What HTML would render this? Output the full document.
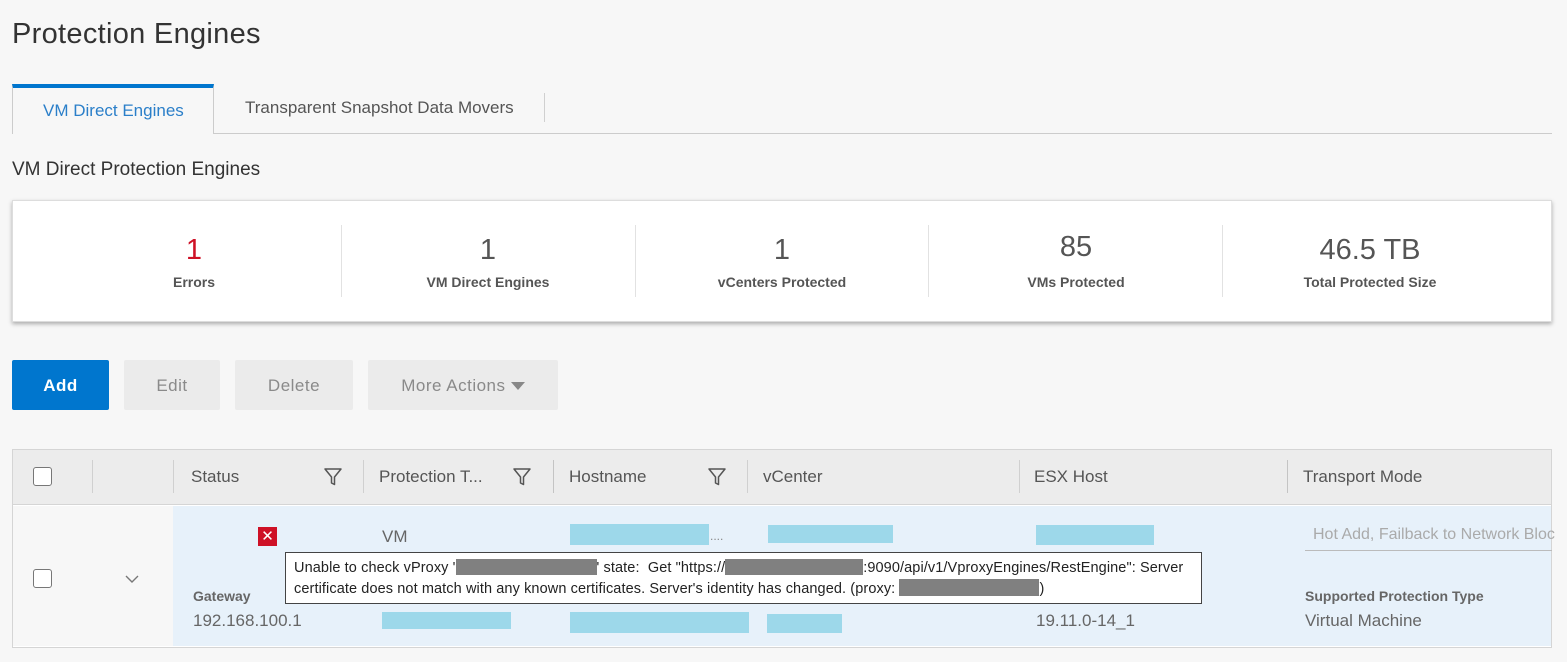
<!DOCTYPE html>
<html><head><meta charset="utf-8"><style>
*{margin:0;padding:0;box-sizing:border-box}
body{width:1567px;height:662px;background:#f7f7f7;font-family:"Liberation Sans",sans-serif;position:relative;overflow:hidden;color:#444}
.a{position:absolute;white-space:nowrap}
.sep{position:absolute;width:1px;background:#d0d0d0}
.cb{position:absolute;width:19px;height:19px;border:1.5px solid #777;border-radius:3px;background:#fff}
.btn{position:absolute;top:360px;height:50px;background:#ebebeb;color:#8a8a8a;font-size:17px;letter-spacing:.5px;display:flex;align-items:center;justify-content:center;border-radius:2px;padding-top:2px}
.num{position:absolute;top:234px;font-size:29px;color:#555;text-align:center;width:290px}
.lab{position:absolute;top:274px;font-size:14px;font-weight:bold;color:#555;text-align:center;width:290px}
.hd{position:absolute;top:467px;font-size:17px;color:#555}
.cy{position:absolute;background:#9dd8ea}
.g{display:inline-block;background:#808080;height:16px;vertical-align:-3px}
</style></head><body>
<div class="a" style="left:12px;top:18px;font-size:29px;letter-spacing:.3px;color:#333">Protection Engines</div>

<div class="a" style="left:12px;top:84px;width:202px;height:50px;border-left:1px solid #ccc;border-right:1px solid #ccc;background:#f7f7f7;border-top:4px solid #0076ce"></div>
<div class="a" style="left:43px;top:101px;font-size:17px;color:#2b7fc9">VM Direct Engines</div>
<div class="a" style="left:245px;top:98px;font-size:17px;color:#555">Transparent Snapshot Data Movers</div>
<div class="sep" style="left:544px;top:93px;height:29px"></div>
<div class="a" style="left:213px;top:133px;width:1339px;height:1px;background:#ccc"></div>

<div class="a" style="left:12px;top:159px;font-size:19px;color:#333">VM Direct Protection Engines</div>

<div class="a" style="left:12px;top:200px;width:1540px;height:122px;background:#fff;border:1px solid #ddd;box-shadow:0 2px 4px rgba(0,0,0,.3)"></div>
<div class="sep" style="left:341px;top:225px;height:72px;background:#e2e2e2"></div>
<div class="sep" style="left:635px;top:225px;height:72px;background:#e2e2e2"></div>
<div class="sep" style="left:928px;top:225px;height:72px;background:#e2e2e2"></div>
<div class="sep" style="left:1222px;top:225px;height:72px;background:#e2e2e2"></div>
<div class="num" style="left:49px;color:#ce1126">1</div><div class="lab" style="left:49px">Errors</div>
<div class="num" style="left:343px">1</div><div class="lab" style="left:343px">VM Direct Engines</div>
<div class="num" style="left:637px">1</div><div class="lab" style="left:637px">vCenters Protected</div>
<div class="num" style="left:931px;top:231px">85</div><div class="lab" style="left:931px">VMs Protected</div>
<div class="num" style="left:1225px">46.5 TB</div><div class="lab" style="left:1225px">Total Protected Size</div>

<div class="btn" style="left:12px;width:97px;background:#0076ce;color:#fff;font-weight:bold">Add</div>
<div class="btn" style="left:124px;width:96px">Edit</div>
<div class="btn" style="left:235px;width:118px">Delete</div>
<div class="btn" style="left:368px;width:190px">More Actions&nbsp;<span style="display:inline-block;width:0;height:0;border-left:7px solid transparent;border-right:7px solid transparent;border-top:8px solid #888"></span></div>

<div class="a" style="left:12px;top:449px;width:1540px;height:199px;border:1px solid #d5d5d5;background:#fff"></div>
<div class="a" style="left:13px;top:450px;width:1538px;height:55px;background:#ececec;border-bottom:1px solid #d5d5d5"></div>
<div class="a" style="left:13px;top:506px;width:160px;height:140px;background:#f7f7f7"></div>
<div class="a" style="left:173px;top:506px;width:1378px;height:140px;background:#e7f1fa"></div>
<div class="sep" style="left:92px;top:460px;height:33px"></div>
<div class="sep" style="left:173px;top:460px;height:33px"></div>
<div class="sep" style="left:363px;top:460px;height:33px"></div>
<div class="sep" style="left:553px;top:460px;height:33px;background:#c4c4c4"></div>
<div class="sep" style="left:747px;top:460px;height:33px"></div>
<div class="sep" style="left:1019px;top:460px;height:33px"></div>
<div class="sep" style="left:1287px;top:460px;height:33px;background:#c4c4c4"></div>
<div class="cb" style="left:33px;top:467px"></div>
<div class="hd" style="left:191px">Status</div>
<div class="hd" style="left:379px">Protection T...</div>
<div class="hd" style="left:569px">Hostname</div>
<div class="hd" style="left:763px">vCenter</div>
<div class="hd" style="left:1034px">ESX Host</div>
<div class="hd" style="left:1303px">Transport Mode</div>
<svg class="a" style="left:323px;top:467px" width="20" height="20" viewBox="0 0 20 20"><path d="M2 2H18L11.5 10V17.5L8.5 16V10Z" fill="none" stroke="#555" stroke-width="1.5" stroke-linejoin="round"/></svg>
<svg class="a" style="left:512px;top:467px" width="20" height="20" viewBox="0 0 20 20"><path d="M2 2H18L11.5 10V17.5L8.5 16V10Z" fill="none" stroke="#555" stroke-width="1.5" stroke-linejoin="round"/></svg>
<svg class="a" style="left:707px;top:467px" width="20" height="20" viewBox="0 0 20 20"><path d="M2 2H18L11.5 10V17.5L8.5 16V10Z" fill="none" stroke="#555" stroke-width="1.5" stroke-linejoin="round"/></svg>

<div class="cb" style="left:33px;top:569px"></div>
<svg class="a" style="left:124px;top:574px" width="16" height="10" viewBox="0 0 16 10"><path d="M2 2L8 8L14 2" fill="none" stroke="#777" stroke-width="1.4"/></svg>
<div class="a" style="left:258px;top:527px;width:19px;height:19px;background:#ce1126;color:#fff;font-size:15px;text-align:center;line-height:19px">✕</div>
<div class="a" style="left:382px;top:527px;font-size:17px;color:#666">VM</div>
<div class="cy" style="left:570px;top:524px;width:139px;height:21px"></div><div class="a" style="left:710px;top:529px;font-size:12px;color:#888">....</div>
<div class="cy" style="left:768px;top:525px;width:125px;height:18px"></div>
<div class="cy" style="left:1036px;top:525px;width:118px;height:20px"></div>
<div class="a" style="left:1313px;top:526px;font-size:16px;color:#aaa">Hot Add, Failback to Network Bloc</div>
<div class="a" style="left:1305px;top:550px;width:247px;height:1px;background:#bbb"></div>

<div class="a" style="left:193px;top:588px;font-size:14px;font-weight:bold;color:#666">Gateway</div>
<div class="a" style="left:193px;top:611px;font-size:17px;color:#666">192.168.100.1</div>
<div class="cy" style="left:382px;top:612px;width:129px;height:17px"></div>
<div class="cy" style="left:570px;top:612px;width:179px;height:21px"></div>
<div class="cy" style="left:767px;top:614px;width:75px;height:19px"></div>
<div class="a" style="left:1036px;top:611px;font-size:17px;color:#666">19.11.0-14_1</div>
<div class="a" style="left:1305px;top:588px;font-size:14px;font-weight:bold;color:#666">Supported Protection Type</div>
<div class="a" style="left:1305px;top:611px;font-size:17px;color:#666">Virtual Machine</div>

<div class="a" style="left:285px;top:552px;width:917px;height:52px;background:#fff;border:1px solid #444"></div>
<div class="a" style="left:294px;top:559px;font-size:14.5px;color:#222;letter-spacing:.1px">Unable to check vProxy '<span class="g" style="width:141px"></span>' state:&nbsp; Get "https://<span class="g" style="width:138px"></span>:9090/api/v1/VproxyEngines/RestEngine": Server</div>
<div class="a" style="left:294px;top:579px;font-size:14.5px;color:#222;letter-spacing:.1px">certificate does not match with any known certificates. Server's identity has changed. (proxy: <span class="g" style="width:140px;height:17px"></span>)</div>
</body></html>
